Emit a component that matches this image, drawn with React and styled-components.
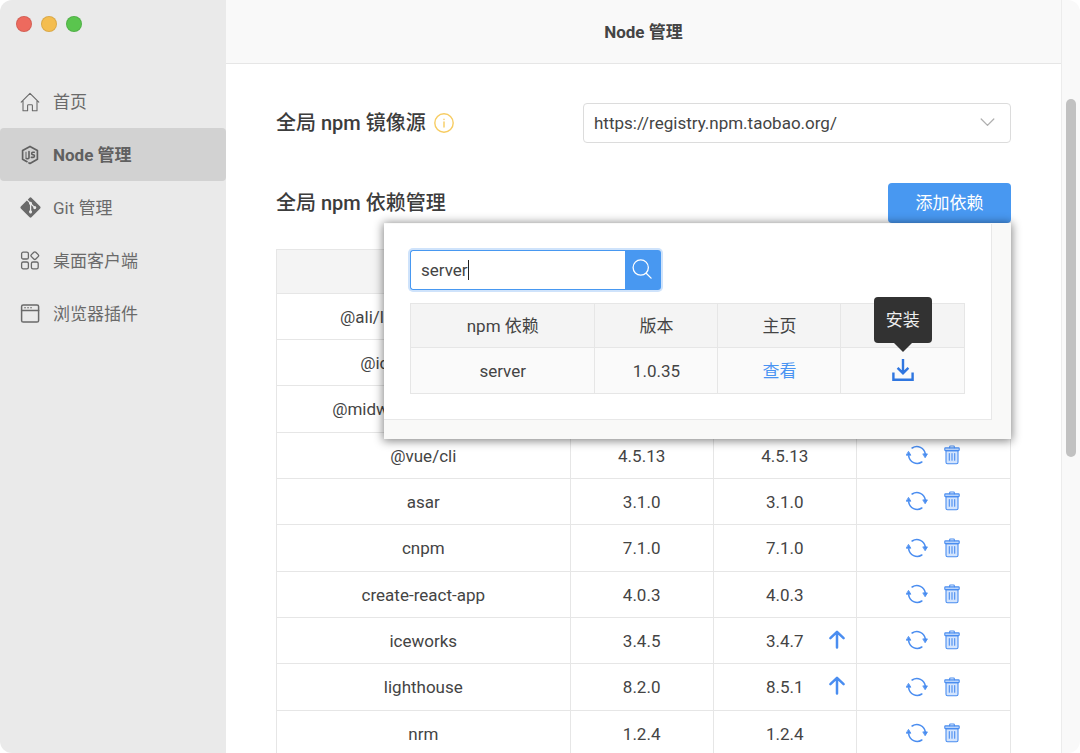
import React, { useState } from "react";
import styled, { createGlobalStyle, css } from "styled-components";
import { FaGitAlt } from "react-icons/fa";

const Global = createGlobalStyle`
  *, *::before, *::after { box-sizing: border-box; }
  body {
    margin: 0;
    background: #fff;
    color: #444;
    font: 17px/24px Roboto, "Noto Sans CJK SC", sans-serif;
  }
  button, input, select { font: inherit; color: inherit; margin: 0; }
  button { cursor: pointer; }
  svg { display: block; flex: none; }
`;

const Window = styled.div`
  display: grid;
  grid-template-columns: 226px minmax(0, 1fr) 19px;
  height: 100vh;
  overflow: hidden;
  border-radius: 12px;
  background: #fff;
`;

const Sidebar = styled.aside`
  background: #eaeaea;
  color: #6a6a6a;
`;

const Lights = styled.div`
  display: flex;
  gap: 9px;
  height: 75px;
  padding: 16px;
`;

const Light = styled.span`
  width: 16px;
  height: 16px;
  border-radius: 50%;
  border: 1px solid rgba(0, 0, 0, 0.1);
  background: ${(p) => p.$color};
`;

const NavItem = styled.a`
  display: grid;
  grid-template-columns: 20px 1fr;
  align-items: center;
  gap: 13px;
  height: 53px;
  padding: 0 20px;
  border-radius: 4px;
  color: inherit;
  text-decoration: none;
  ${(p) =>
    p.$active &&
    css`
      background: #d2d2d2;
      color: #606060;
      font-weight: 700;
    `}
`;

const NavIcon = styled.span`
  display: flex;
  justify-content: center;
`;

const Main = styled.main`
  display: flex;
  flex-direction: column;
  min-height: 0;
  overflow: hidden;
`;

const Header = styled.header`
  flex: none;
  display: flex;
  align-items: center;
  justify-content: center;
  height: 64px;
  background: #f9f9f9;
  border-bottom: 1px solid #e6e6e6;
`;

const Title = styled.h1`
  margin: 0;
  font-size: 17px;
  font-weight: 700;
`;

const Content = styled.div`
  flex: 1;
  min-height: 0;
  padding: 39px 50px 0;
  overflow: hidden;
`;

const Row = styled.section`
  display: flex;
  align-items: center;
  justify-content: space-between;
  height: 40px;
  margin-bottom: ${(p) => p.$gap}px;
`;

const Heading = styled.h2`
  display: flex;
  align-items: center;
  gap: 8px;
  margin: 0;
  font-size: 20px;
  font-weight: 500;
  color: #3c3c3c;
`;

const SelectBox = styled.div`
  position: relative;
  width: 428px;

  svg {
    position: absolute;
    top: 15px;
    right: 16px;
    pointer-events: none;
  }
`;

const Select = styled.select`
  appearance: none;
  width: 100%;
  height: 40px;
  padding: 0 40px 0 10px;
  border: 1px solid #dcdcdc;
  border-radius: 4px;
  background: #fff;
`;

const Anchor = styled.div`
  position: relative;
`;

const AddButton = styled.button`
  display: block;
  width: 123px;
  height: 40px;
  border: 0;
  border-radius: 4px;
  background: #4898f1;
  color: #fff;
`;

const Popover = styled.div`
  position: absolute;
  z-index: 2;
  top: 100%;
  right: 0;
  width: 627px;
  padding: 0 19px 18px 0;
  background: #f9f9f8;
  border: 1px solid #f9f9f8;
  border-width: 1px 0;
  box-shadow: 0 1px 9px 1px rgba(0, 0, 0, 0.48);
`;

const PopoverBody = styled.div`
  padding: 26px 26px 25px;
  border: solid #e8e8e8;
  border-width: 0 1px 1px 0;
  background: #fff;
`;

const Search = styled.form`
  display: flex;
  width: 251px;
  height: 40px;
  margin: 0 0 13px;
  border-radius: 3px;
  box-shadow: 0 0 0 2px #cfe3fb;
`;

const Field = styled.label`
  flex: 1;
  display: flex;
  align-items: center;
  padding: 0 10px;
  border: 1px solid #4898f1;
  border-right: 0;
  border-radius: 3px 0 0 3px;
  background: #fff;
`;

const TextInput = styled.input`
  field-sizing: content;
  max-width: 190px;
  padding: 0;
  border: 0;
  outline: 0;
  background: none;
  caret-color: transparent;
`;

const Caret = styled.span`
  width: 1px;
  height: 20px;
  background: #222;
`;

const SearchButton = styled.button`
  display: flex;
  align-items: center;
  justify-content: center;
  width: 36px;
  padding: 0 2px 2px 0;
  border: 0;
  border-radius: 0 3px 3px 0;
  background: #4898f1;
  color: #fff;
`;

const Table = styled.table`
  width: 100%;
  table-layout: fixed;
  border-collapse: collapse;
  text-align: center;

  th, td {
    padding: 0;
    border: 1px solid #e6e6e6;
    font-weight: 400;
  }
  th { height: 44px; background: #f4f4f4; }
  td { height: 46px; background: ${(p) => p.$cell || "#fff"}; }
  tbody tr:nth-child(3n) td { height: 47px; }
`;

const Latest = styled.div`
  display: grid;
  grid-template-columns: 1fr auto 1fr;
  align-items: center;
  padding: 0 10px;

  span { grid-column: 2; }
`;

const IconButton = styled.button`
  display: inline-grid;
  place-items: center;
  padding: 0;
  border: 0;
  background: none;
  color: ${(p) => p.$color || "#4a8df0"};
  justify-self: ${(p) => p.$align || "auto"};
`;

const Actions = styled.div`
  display: flex;
  justify-content: center;
  gap: 16px;
  padding: 0 1px 1px 0;
`;

const PageLink = styled.a`
  color: #4a94f2;
  text-decoration: none;
`;

const TipAnchor = styled.div`
  position: relative;
  display: grid;
  place-items: center;
`;

const Tooltip = styled.div`
  position: absolute;
  bottom: 40px;
  left: 50%;
  transform: translateX(-50%);
  width: 58px;
  border-radius: 4px;
  background: #323232;
  color: #eee;
  line-height: 46px;

  &::after {
    content: "";
    position: absolute;
    top: 100%;
    left: 50%;
    margin-left: -9px;
    border: 9px solid transparent;
    border-top-color: #323232;
    border-bottom: 0;
  }
`;

const Track = styled.div`
  padding: 99px 4px 0;
  background: #f9f9f9;
  border-left: 1px solid #ececec;
`;

const Thumb = styled.div`
  width: 10px;
  height: 358px;
  border-radius: 5px;
  background: #c1c1c1;
`;

const line = { fill: "none", stroke: "currentColor", strokeLinecap: "round", strokeLinejoin: "round" };

const HomeIcon = () => (
  <svg width="20" height="20" viewBox="0 0 20 20" {...line} strokeWidth="1.1">
    <path d="M1.2 10.2 10 1.3l8.8 8.9M3 8.6v10.2h4.6v-5.3c0-.5.3-.8.8-.8h3.2c.5 0 .8.3.8.8v5.3H17V8.6" />
  </svg>
);

const NodeIcon = () => (
  <svg width="20" height="20" viewBox="0 0 20 20" {...line} strokeWidth="1.7">
    <path d="M7 16.7 2.6 14.3V5.5L10 1.4l7.4 4.1v8.8L10 18.4l-1-.5" />
    <path d="M9 6.6v5.8c0 1.1-1 1.6-2.6 1.1M14.3 7.2h-1.5c-1.5 0-1.5 2.5 0 2.5h.4c1.7 0 1.7 2.7 0 2.7h-1.8" strokeWidth="1.6" />
    <path d="M6 7.2v6" strokeWidth="1" />
  </svg>
);

const AppsIcon = () => (
  <svg width="20" height="20" viewBox="0 0 20 20" {...line} strokeWidth="1.3">
    <rect x="1.6" y="1.2" width="6.8" height="6.8" rx="1.6" />
    <rect x="1.6" y="11" width="6.8" height="6.8" rx="1.6" />
    <rect x="11.4" y="11" width="6.8" height="6.8" rx="1.6" />
    <rect x="11.7" y="1.5" width="6.2" height="6.2" rx="1.4" transform="rotate(45 14.8 4.6)" />
  </svg>
);

const BrowserIcon = () => (
  <svg width="20" height="20" viewBox="0 0 20 20" {...line} strokeWidth="1.5">
    <rect x="1.6" y="1" width="17" height="17" rx="1.6" />
    <path d="M1.6 6.4h17" />
    <path d="M4.6 3.8h.9M7.6 3.8h.9M10.6 3.8h.9" strokeWidth="1.1" />
  </svg>
);

const InfoIcon = () => (
  <svg width="20" height="20" viewBox="0 0 20 20" {...line} stroke="#f7cc62" strokeWidth="1.4">
    <circle cx="10" cy="10" r="9.2" />
    <path d="M10 9v5M10 6.2v.3" />
  </svg>
);

const ChevronIcon = () => (
  <svg width="15" height="9" viewBox="0 0 15 9" {...line} stroke="#b0b0b0" strokeWidth="1.3">
    <path d="m1.2 1 6.3 6.4L13.8 1" />
  </svg>
);

const SearchIcon = () => (
  <svg width="20" height="20" viewBox="0 0 22 22" {...line} strokeWidth="1.4">
    <circle cx="9.6" cy="9.4" r="8.4" />
    <path d="m15.6 15.6 5.4 5.4" />
  </svg>
);

const RefreshIcon = () => (
  <svg width="22" height="20" viewBox="0 0 22 20" {...line} strokeWidth="1.6">
    <path d="M6.2 3A8.5 8.5 0 0 1 19.3 9M15.8 17A8.5 8.5 0 0 1 2.7 11" />
    <path d="M17.2 8.9h4.2l-2.1 3.5zM.6 10.2h4.2L2.7 6.7z" fill="currentColor" strokeWidth=".9" />
  </svg>
);

const TrashIcon = () => (
  <svg width="16" height="20" viewBox="0 0 16 20" {...line} strokeWidth="1.1">
    <path d="M2 5.6h12v11.6c0 .9-.6 1.5-1.5 1.5h-9c-.9 0-1.5-.6-1.5-1.5z" fill="#d3e4fd" />
    <rect x=".8" y="2.9" width="14.4" height="2.7" rx=".6" fill="#b9d4fb" />
    <path d="M5.6 2.7V1.9c0-.5.4-.9.9-.9h3c.5 0 .9.4.9.9v.8" />
    <path d="M5.3 8.6v6.6M8 8.6v6.6M10.7 8.6v6.6" />
  </svg>
);

const UpIcon = () => (
  <svg width="18" height="24" viewBox="0 0 18 24" {...line} strokeWidth="2.5">
    <path d="M9 18.6V3.2M2.4 9.2 9 2.8l6.6 6.4" />
  </svg>
);

const DownloadIcon = () => (
  <svg width="22" height="24" viewBox="0 0 22 24" {...line} strokeLinecap="butt" strokeLinejoin="miter" strokeWidth="2.4">
    <path d="M11 0v14M5.6 8.8l5.4 5.4 5.4-5.4M1.4 13.4v7.4h19.2v-7.4" />
  </svg>
);

const NAV = [
  ["首页", <HomeIcon />],
  ["Node 管理", <NodeIcon />],
  ["Git 管理", <FaGitAlt size={23} />],
  ["桌面客户端", <AppsIcon />],
  ["浏览器插件", <BrowserIcon />],
];

const PACKAGES = [
  ["@ali/lowcode-runtime"],
  ["@iceworks/spec"],
  ["@midwayjs/faas-cli-test"],
  ["@vue/cli", "4.5.13", "4.5.13"],
  ["asar", "3.1.0", "3.1.0"],
  ["cnpm", "7.1.0", "7.1.0"],
  ["create-react-app", "4.0.3", "4.0.3"],
  ["iceworks", "3.4.5", "3.4.7"],
  ["lighthouse", "8.2.0", "8.5.1"],
  ["nrm", "1.2.4", "1.2.4"],
];

function InstallPopover() {
  const [query, setQuery] = useState("server");
  return (
    <Popover>
      <PopoverBody>
        <Search onSubmit={(e) => e.preventDefault()}>
          <Field>
            <TextInput aria-label="npm 依赖" value={query} onChange={(e) => setQuery(e.target.value)} />
            <Caret />
          </Field>
          <SearchButton aria-label="搜索"><SearchIcon /></SearchButton>
        </Search>
        <Table $cell="#fafafa">
          <colgroup>
            <col width="33.3%" /><col width="22.2%" /><col width="22.2%" /><col />
          </colgroup>
          <thead>
            <tr><th>npm 依赖</th><th>版本</th><th>主页</th><th /></tr>
          </thead>
          <tbody>
            <tr>
              <td>server</td>
              <td>1.0.35</td>
              <td><PageLink href="#server">查看</PageLink></td>
              <td>
                <TipAnchor>
                  <IconButton $color="#2f76e0" aria-label="安装"><DownloadIcon /></IconButton>
                  <Tooltip role="tooltip">安装</Tooltip>
                </TipAnchor>
              </td>
            </tr>
          </tbody>
        </Table>
      </PopoverBody>
    </Popover>
  );
}

export default function App() {
  return (
    <>
      <Global />
      <Window>
        <Sidebar>
          <Lights>
            <Light $color="#ed6a5e" />
            <Light $color="#f4bd4f" />
            <Light $color="#5ac54e" />
          </Lights>
          <nav>
            {NAV.map(([label, icon], i) => (
              <NavItem key={label} href={`#${i}`} $active={i === 1}>
                <NavIcon>{icon}</NavIcon>
                {label}
              </NavItem>
            ))}
          </nav>
        </Sidebar>
        <Main>
          <Header><Title>Node 管理</Title></Header>
          <Content>
            <Row $gap={40}>
              <Heading>全局 npm 镜像源 <InfoIcon /></Heading>
              <SelectBox>
                <Select aria-label="全局 npm 镜像源">
                  <option>https://registry.npm.taobao.org/</option>
                </Select>
                <ChevronIcon />
              </SelectBox>
            </Row>
            <Row $gap={26}>
              <Heading>全局 npm 依赖管理</Heading>
              <Anchor>
                <AddButton>添加依赖</AddButton>
                <InstallPopover />
              </Anchor>
            </Row>
            <Table>
              <colgroup>
                <col width="40%" /><col width="19.5%" /><col width="19.5%" /><col />
              </colgroup>
              <thead>
                <tr><th /><th /><th /><th /></tr>
              </thead>
              <tbody>
                {PACKAGES.map(([name, current, latest]) => (
                  <tr key={name}>
                    <td>{name}</td>
                    <td>{current}</td>
                    <td>
                      <Latest>
                        <span>{latest}</span>
                        {current !== latest && (
                          <IconButton $align="end" aria-label="升级"><UpIcon /></IconButton>
                        )}
                      </Latest>
                    </td>
                    <td>
                      <Actions>
                        <IconButton aria-label="重新安装"><RefreshIcon /></IconButton>
                        <IconButton aria-label="删除"><TrashIcon /></IconButton>
                      </Actions>
                    </td>
                  </tr>
                ))}
              </tbody>
            </Table>
          </Content>
        </Main>
        <Track><Thumb /></Track>
      </Window>
    </>
  );
}
